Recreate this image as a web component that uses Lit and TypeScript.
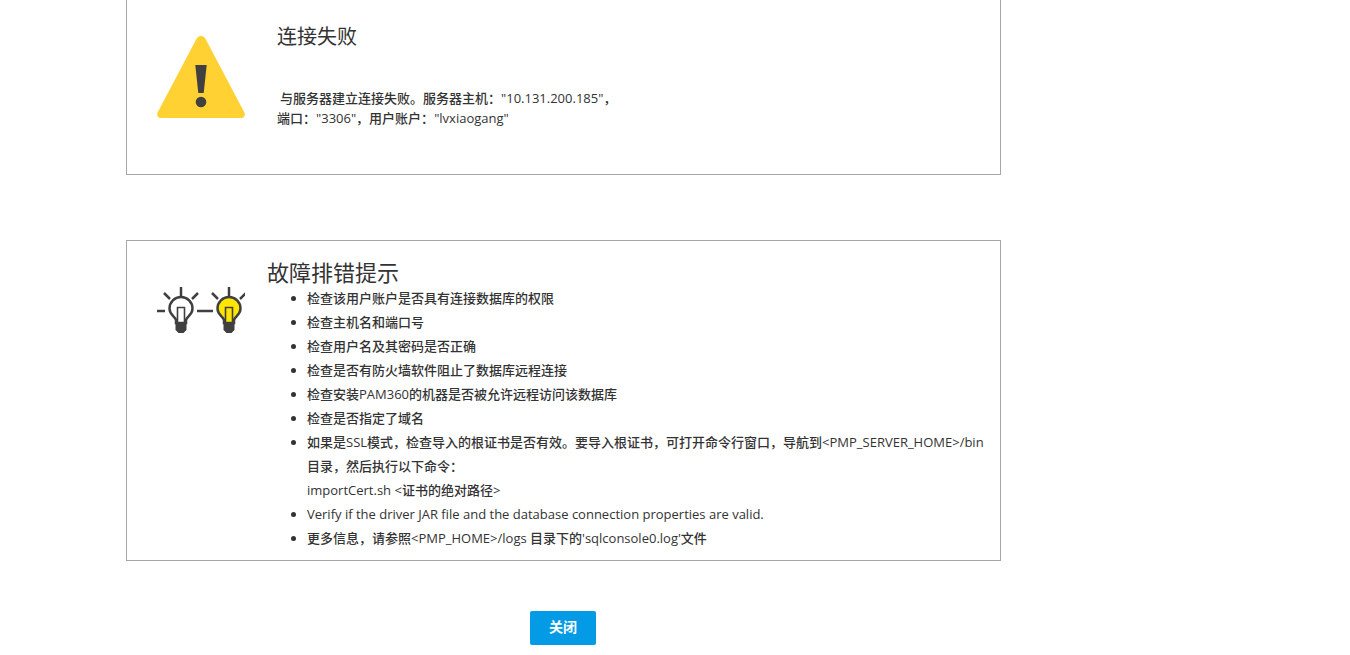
import { LitElement, html, css } from "lit";
import { customElement } from "lit/decorators.js";

/* Chinese runs are set heavier than the Latin runs around them. */
const mixed = (text: string) =>
  text
    .split(/([\u3000-\u303f\u4e00-\u9fff\uff00-\uffef]+)/)
    .map((part, i) => (i % 2 ? html`<span class="cjk">${part}</span>` : part));

const TIPS_BEFORE = [
  "检查该用户账户是否具有连接数据库的权限",
  "检查主机名和端口号",
  "检查用户名及其密码是否正确",
  "检查是否有防火墙软件阻止了数据库远程连接",
  "检查安装PAM360的机器是否被允许远程访问该数据库",
  "检查是否指定了域名",
];

@customElement("app-root")
export class AppRoot extends LitElement {
  static styles = css`
    :host {
      display: block;
      height: 655px;
      overflow: hidden;
      background: #fff;
      font-family: "Open Sans", "Noto Sans CJK SC", sans-serif;
      font-size: 13px;
      color: #333;
    }
    .cjk {
      font-weight: 500;
    }
    .page {
      width: 875px;
      margin-left: 126px;
      display: flex;
      flex-direction: column;
    }
    .box {
      box-sizing: border-box;
      border: 1px solid #a6a6a6;
      display: flex;
    }
    .fail {
      height: 175px;
      border-top: none;
    }
    .warn-icon {
      width: 88px;
      height: 82px;
      margin: 36px 0 0 30px;
      flex: none;
    }
    .fail-body {
      margin-left: 32px;
      padding-top: 23px;
    }
    .fail h2 {
      margin: 0;
      font-size: 20px;
      font-weight: 400;
      line-height: 28px;
    }
    .msg {
      margin: 37px 0 0;
      line-height: 20px;
    }
    .indent {
      padding-left: 3px;
    }
    .tips {
      height: 321px;
      margin-top: 65px;
    }
    .bulb-icon {
      width: 88px;
      height: 50px;
      margin: 45px 0 0 30px;
      flex: none;
    }
    .tips-body {
      margin-left: 22px;
      padding-top: 19px;
    }
    .tips h2 {
      margin: 0;
      font-size: 22px;
      font-weight: 400;
      line-height: 24px;
    }
    ul {
      margin: 2px 0 0;
      padding: 0 14px 0 40px;
      line-height: 24px;
    }
    .actions {
      margin: 50px 0 0 404px;
    }
    button {
      width: 66px;
      height: 34px;
      border: none;
      border-radius: 2px;
      background: #039be5;
      color: #fff;
      font: 600 14px/32px "Open Sans", "Noto Sans CJK SC", sans-serif;
      padding: 0 0 2px;
    }
  `;

  private bulb(cx: number, fill: string) {
    return html`
      <svg x=${cx - 24} width="48" height="50" viewBox="0 0 48 50" fill="none" stroke="#404040">
        <path d="M19 37v-3c-1-4-6.500-5-6.500-11.500a11.500 11.500 0 0 1 23 0c0 6.500-5.500 7.500-6.500 11.500v3z" fill=${fill} stroke-width="2.500" />
        <path d="M20.500 37V21.500h7V37" stroke-width="1.600" />
        <path d="M18.500 38h11v6l-3 3h-5l-3-3z" fill="#404040" stroke="none" />
      </svg>
    `;
  }

  render() {
    return html`
      <div class="page">
        <section class="box fail">
          <svg class="warn-icon" viewBox="0 0 88 82">
            <path d="M44 0c2.200 0 3.600 1.300 4.600 3L87.400 76.500c1.300 2.600-.2 5.500-3.200 5.500H3.800C.8 82-.7 79.100.6 76.500L39.400 3c1-1.700 2.400-3 4.600-3z" fill="#ffd133" />
            <path d="M38.300 29h11.400l-3 28h-5.400z" fill="#404040" />
            <circle cx="44" cy="66" r="5.300" fill="#404040" />
          </svg>
          <div class="fail-body">
            <h2>连接失败</h2>
            <p class="msg">
              <span class="indent">${mixed('与服务器建立连接失败。服务器主机："10.131.200.185"，')}</span><br />
              ${mixed('端口："3306"，用户账户："lvxiaogang"')}
            </p>
          </div>
        </section>
        <section class="box tips">
          <svg class="bulb-icon" viewBox="0 0 88 50" fill="none">
            <path stroke="#404040" stroke-width="2.500" d="M0 25h8M24 1v9M7 7l6 6M41 7l-6 6M40 25h16M72 1v9M55 7l6 6M89 7l-6 6" />
            ${this.bulb(24, "#fff")}
            ${this.bulb(72, "#ffe600")}
          </svg>
          <div class="tips-body">
            <h2>故障排错提示</h2>
            <ul>
              ${TIPS_BEFORE.map((t) => html`<li>${mixed(t)}</li>`)}
              <li>
                ${mixed("如果是SSL模式，检查导入的根证书是否有效。要导入根证书，可打开命令行窗口，导航到<PMP_SERVER_HOME>/bin目录，然后执行以下命令：")}<br />
                ${mixed("importCert.sh <证书的绝对路径>")}
              </li>
              <li>Verify if the driver JAR file and the database connection properties are valid.</li>
              <li>${mixed("更多信息，请参照<PMP_HOME>/logs 目录下的'sqlconsole0.log'文件")}</li>
            </ul>
          </div>
        </section>
        <div class="actions"><button>关闭</button></div>
      </div>
    `;
  }
}
